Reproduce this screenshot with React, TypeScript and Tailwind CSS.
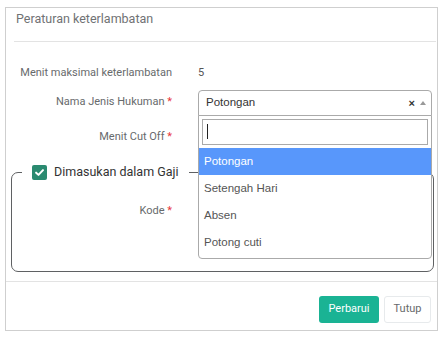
import React from "react";

export default function App() {
  const font = { fontFamily: "Roboto, 'Liberation Sans', Arial, sans-serif" };
  const arial = { fontFamily: "'Liberation Sans', Arial, sans-serif" };
  return (
    <div className="w-[445px] h-[339px] bg-white overflow-hidden" style={font}>
      <div className="ml-[5px] mt-[7px] w-[433px] h-[324px] border border-[#cfcfcf] flex flex-col">
        {/* Header */}
        <div className="h-[33px] pl-[10px] pt-[2px] text-[12.5px] leading-[18px] text-[#707274]">
          Peraturan keterlambatan
        </div>
        <div className="ml-[8px] mr-[1px] h-px bg-[#e3e3e3]" />

        {/* Body */}
        <div className="relative flex-1 text-[11px] text-[#676a6c]">
          <div className="pt-[21px]">
            <div className="flex items-center h-[20px]">
              <div className="w-[166px] text-right">Menit maksimal keterlambatan</div>
              <div className="ml-[26px] text-[#555]">5</div>
            </div>
            <div className="flex items-center h-[25px] mt-[7px]">
              <div className="w-[166px] text-right">
                Nama Jenis Hukuman <span className="text-[#e8373c]">*</span>
              </div>
            </div>
            <div className="flex items-center h-[25px] mt-[10px]">
              <div className="w-[166px] text-right">
                Menit Cut Off <span className="text-[#e8373c]">*</span>
              </div>
            </div>
          </div>

          <fieldset className="ml-[5px] mr-[3px] mt-[12px] h-[110px] border border-[#5f6163] rounded-[7px]">
            <legend className="ml-[10px] px-[10px] h-[20px]">
              <div className="flex items-center h-[20px]">
                <div className="w-[15px] h-[15px] rounded-[2px] bg-[#2a8a70] flex items-center justify-center">
                  <svg width="11" height="11" viewBox="0 0 12 12">
                    <path d="M2.3 6.2 L4.9 8.6 L9.8 3.4" stroke="white" strokeWidth="2.2" fill="none" strokeLinecap="round" strokeLinejoin="round" />
                  </svg>
                </div>
                <span className="ml-[7px] text-[12.5px] text-[#333]">Dimasukan dalam Gaji</span>
              </div>
            </legend>
            <div className="flex items-center h-[20px] mt-[19px]">
              <div className="w-[160px] text-right">
                Kode <span className="text-[#e8373c]">*</span>
              </div>
            </div>
          </fieldset>

          {/* Select box */}
          <div className="absolute left-[192px] top-[48px] w-[234px] h-[26px] border border-[#aaaaaa] rounded-t-[4px] bg-white flex items-center text-[11.5px]" style={arial}>
            <span className="ml-[7px] text-[#333]">Potongan</span>
            <span className="ml-auto text-[11px] font-bold text-[#333] leading-none">×</span>
            <span className="ml-[5px] mr-[5px] w-0 h-0 border-l-[3px] border-r-[3px] border-b-[4px] border-l-transparent border-r-transparent border-b-[#999]" />
          </div>

          {/* Dropdown */}
          <div className="absolute left-[192px] top-[73px] w-[234px] h-[144px] border border-[#aaaaaa] rounded-b-[4px] bg-white text-[11.5px]" style={arial}>
            <div className="px-[3px] pt-[3px]">
              <div className="relative h-[26px] border border-[#aaaaaa]">
                <div className="absolute left-[4px] top-[4px] w-px h-[15px] bg-[#222]" />
              </div>
            </div>
            <div className="mt-[3px]">
              <div className="h-[27px] bg-[#5897fb] text-white flex items-center pl-[5px]">Potongan</div>
              <div className="h-[27px] text-[#555] flex items-center pl-[5px]">Setengah Hari</div>
              <div className="h-[27px] text-[#555] flex items-center pl-[5px]">Absen</div>
              <div className="h-[27px] text-[#555] flex items-center pl-[5px]">Potong cuti</div>
            </div>
          </div>
        </div>

        {/* Footer */}
        <div className="h-px bg-[#e3e3e3]" />
        <div className="h-[48px] flex justify-end items-start pt-[14px] pr-[6px] gap-[5px] text-[11px]">
          <button className="w-[60px] h-[27px] rounded-[3px] bg-[#1ab394] text-white">Perbarui</button>
          <button className="w-[47px] h-[27px] rounded-[3px] border border-[#e7eaec] bg-white text-[#676a6c]">Tutup</button>
        </div>
      </div>
    </div>
  );
}
